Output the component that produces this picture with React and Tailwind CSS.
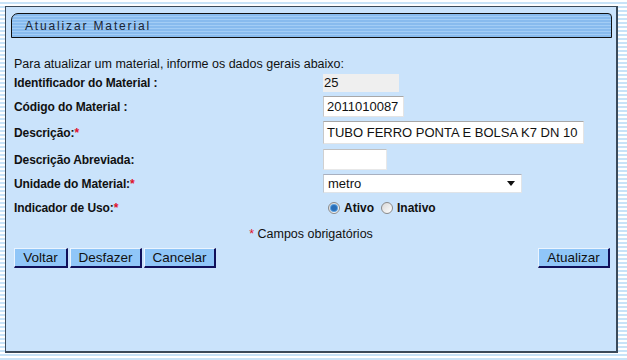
import React from 'react';

const font = { fontFamily: '"Liberation Sans", Arial, sans-serif' };

function Label({ children, required }) {
  return (
    <div className="w-[309px] shrink-0 text-[12px] font-bold tracking-[-0.1px] text-[#111]">
      {children}
      {required && <span className="text-[#e0102a]">*</span>}
    </div>
  );
}

function Btn({ children, className = '' }) {
  return (
    <button
      className={
        'h-[20px] border border-t-[#eaf4ff] border-l-[#eaf4ff] border-b-[#10105a] border-r-[#10105a] border-b-2 border-r-2 bg-[#90c6f8] text-center text-[13.5px] leading-none text-[#111] ' +
        className
      }
    >
      {children}
    </button>
  );
}

function Radio({ checked }) {
  return (
    <span className="flex h-[12px] w-[12px] items-center justify-center rounded-full border border-[#8a8a8a] bg-gradient-to-br from-[#d8d8d8] to-[#ffffff]">
      {checked && <span className="h-[6px] w-[6px] rounded-full bg-[#2a6fb8] shadow-[0_0_0_1px_#5aa0e0]" />}
    </span>
  );
}

export default function App() {
  return (
    <div
      style={font}
      className="h-[360px] w-[627px] overflow-hidden bg-[repeating-linear-gradient(to_bottom,#ffffff_0px,#ffffff_2px,#c8e3f8_2px,#c8e3f8_4px)] pl-[5px] pt-[6px]"
    >
      <div className="h-[347px] w-[613px] border border-r-2 border-b-2 border-[#3a4a5a] bg-[#cae3fb] pt-[6px]">
        {/* title tab */}
        <div className="ml-[5px] flex h-[25px] w-[601px] items-center rounded-tl-[7px] rounded-tr-[4px] border border-[#111] bg-[repeating-linear-gradient(to_bottom,#88bbee_0px,#88bbee_2px,#a3cdf5_2px,#a3cdf5_3px)] pl-[13px]">
          <span className="text-[12px] tracking-[1.85px] text-[#1a2433]">Atualizar Material</span>
        </div>

        <div className="pl-[8px] pt-[19px]">
          <div className="h-[14px] text-[12.5px] leading-[14px] text-[#111]">
            Para atualizar um material, informe os dados gerais abaixo:
          </div>

          <div className="mt-[3px] flex h-[18px] items-center">
            <Label>Identificador do Material :</Label>
            <div className="flex h-[18px] w-[76px] items-center bg-[#efefef] pl-[1px] text-[13px] text-[#111]">25</div>
          </div>

          <div className="mt-[4px] flex h-[21px] items-center">
            <Label>Código do Material :</Label>
            <div className="flex h-[21px] w-[81px] items-center border border-t-[#a8a8a8] border-l-[#c8c8c8] border-b-[#e4e4e4] border-r-[#e4e4e4] bg-white pl-[3px] text-[13px] text-[#111]">
              2011010087
            </div>
          </div>

          <div className="mt-[4px] flex h-[23px] items-center">
            <Label required>Descrição:</Label>
            <div className="flex h-[23px] w-[261px] items-center overflow-hidden whitespace-nowrap border border-t-[#a8a8a8] border-l-[#c8c8c8] border-b-[#e4e4e4] border-r-[#e4e4e4] bg-white pl-[3px] text-[13px] text-[#111]">
              TUBO FERRO PONTA E BOLSA K7 DN 10
            </div>
          </div>

          <div className="mt-[5px] flex h-[21px] items-center">
            <Label>Descrição Abreviada:</Label>
            <div className="h-[21px] w-[64px] border border-t-[#c0c0c0] border-l-[#d0d0d0] border-b-[#e8e8e8] border-r-[#e8e8e8] bg-white" />
          </div>

          <div className="mt-[4px] flex h-[19px] items-center">
            <Label required>Unidade do Material:</Label>
            <div className="flex h-[19px] w-[199px] items-center justify-between border border-t-[#a8b0c0] border-l-[#c0c8d0] border-b-[#e0e4e8] border-r-[#e0e4e8] bg-white pl-[4px] pr-[6px] text-[13px] text-[#111]">
              <span>metro</span>
              <svg width="8" height="5" viewBox="0 0 8 5">
                <path d="M0 0H8L4 5Z" fill="#111" />
              </svg>
            </div>
          </div>

          <div className="mt-[6px] flex h-[18px] items-center">
            <Label required>Indicador de Uso:</Label>
            <div className="flex items-center pl-[5px] text-[12px] font-bold text-[#111]">
              <Radio checked />
              <span className="ml-[4px]">Ativo</span>
              <span className="ml-[7px]" />
              <Radio />
              <span className="ml-[4px]">Inativo</span>
            </div>
          </div>

          <div className="mt-[10px] h-[14px] pr-[8px] text-center text-[12.5px] leading-[14px] text-[#111]">
            <span className="text-[#e0102a]">*</span> Campos obrigatórios
          </div>

          <div className="mt-[7px] flex items-center pr-[6px]">
            <Btn className="w-[54px]">Voltar</Btn>
            <Btn className="ml-[2px] w-[72px]">Desfazer</Btn>
            <Btn className="ml-[2px] w-[72px]">Cancelar</Btn>
            <Btn className="ml-auto w-[72px]">Atualizar</Btn>
          </div>
        </div>
      </div>
    </div>
  );
}
